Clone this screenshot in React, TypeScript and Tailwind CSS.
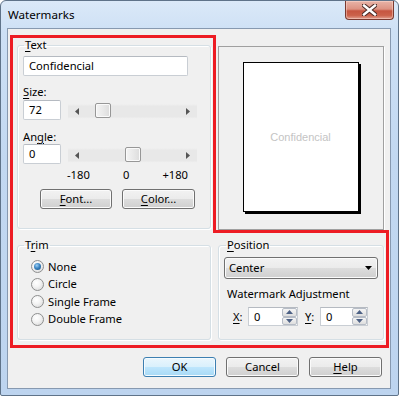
import React from "react";

function Btn({ children, className = "", def = false }: { children: React.ReactNode; className?: string; def?: boolean }) {
  return (
    <div
      className={
        "h-[20px] rounded-[3px] border flex items-center justify-center text-[11.2px] leading-[16px] text-black " +
        (def
          ? "border-[#3c7fb1] bg-[linear-gradient(#eaf6fd_0%,#d9f0fc_50%,#bee6fd_50%,#a7d9f5_100%)] shadow-[inset_0_0_0_1px_#f4fbff] "
          : "border-[#707070] bg-[linear-gradient(#f2f2f2_0%,#ebebeb_50%,#dddddd_50%,#cfcfcf_100%)] shadow-[inset_0_0_0_1px_#fbfbfb] ") +
        className
      }
    >
      {children}
    </div>
  );
}

function Track({ thumb }: { thumb: number }) {
  return (
    <div className="relative w-[129px] h-[15px] bg-[linear-gradient(#f0f0f0_0%,#e8e8e8_15%,#e8e8e8_85%,#f2f2f2_100%)]">
      <svg className="absolute left-[7px] top-[4px]" width="5" height="7" viewBox="0 0 5 7">
        <path d="M4 0 L0 3.5 L4 7 Z" fill="#555" />
      </svg>
      <svg className="absolute right-[7px] top-[4px]" width="5" height="7" viewBox="0 0 5 7">
        <path d="M1 0 L5 3.5 L1 7 Z" fill="#555" />
      </svg>
      <div
        className="absolute top-[-1px] h-[15px] w-[16px] rounded-[2px] border border-[#979797] bg-[linear-gradient(90deg,#f4f4f4_0%,#e9e9e9_50%,#dcdcdc_100%)] shadow-[inset_0_0_0_1px_#fafafa]"
        style={{ left: thumb }}
      />
    </div>
  );
}

function TextBox({ value, className = "" }: { value: string; className?: string }) {
  return (
    <div
      className={
        "h-[20px] bg-white border border-[#c9ced4] border-t-[#b5bac1] rounded-[2px] flex items-center pl-[5px] text-[11.2px] leading-[16px] text-black " +
        className
      }
    >
      {value}
    </div>
  );
}

function Radio({ checked, label }: { checked?: boolean; label: string }) {
  return (
    <div className="h-[17.5px] flex items-center gap-[4px]">
      <div className="w-[13px] h-[13px] rounded-full border border-[#8e8f8f] bg-[radial-gradient(circle_at_40%_35%,#ffffff_0%,#f4f4f4_40%,#d4d4d4_100%)] flex items-center justify-center">
        {checked && (
          <div className="w-[7px] h-[7px] rounded-full bg-[radial-gradient(circle_at_40%_35%,#9fd0f5_0%,#3c86c3_45%,#154a7b_100%)]" />
        )}
      </div>
      <span className="text-[11.2px] leading-[16px] text-black">{label}</span>
    </div>
  );
}

function Spin({ className = "" }: { className?: string }) {
  return (
    <div
      className={
        "h-[19px] bg-white border border-[#c9ced4] border-t-[#b5bac1] flex items-stretch " + className
      }
    >
      <div className="flex-1 pl-[5px] text-[11.2px] leading-[17px] text-black">0</div>
      <div className="w-[15px] flex flex-col">
        <div className="flex-1 border border-[#b6bcc6] rounded-[2px] bg-[linear-gradient(#f5f5f5,#dedede)] flex items-center justify-center">
          <svg width="7" height="4" viewBox="0 0 7 4">
            <path d="M0 4 L3.5 0 L7 4 Z" fill="#4d6185" />
          </svg>
        </div>
        <div className="flex-1 border border-[#b6bcc6] rounded-[2px] bg-[linear-gradient(#f5f5f5,#dedede)] flex items-center justify-center">
          <svg width="7" height="4" viewBox="0 0 7 4">
            <path d="M0 0 L3.5 4 L7 0 Z" fill="#4d6185" />
          </svg>
        </div>
      </div>
    </div>
  );
}

const fieldset =
  "border border-[#d5dfe5] rounded-[3px] shadow-[inset_1px_1px_0_#fff,1px_1px_0_#fff] m-0";
const legend = "px-[1px] text-[11.2px] leading-[16px] text-black";

export default function App() {
  return (
    <div className="font-['Noto_Sans',sans-serif] w-[399px] h-[396px] relative">
      <div className="w-[399px] h-[396px] border border-[#5f7389] rounded-t-[6px] rounded-b-[2px] bg-[linear-gradient(180deg,#dbe9f8_0%,#cde0f5_8%,#c2d8f1_40%,#bdd4ef_100%)] flex flex-col px-[6px] pb-[6px] relative">
        <div className="h-[27px] pl-[1px] pt-[6px] text-[11.6px] leading-[16px] text-black">Watermarks</div>
        <div className="absolute top-0 right-[4px] w-[49px] h-[19px] rounded-b-[4px] border border-t-0 border-[#7a3a30] bg-[linear-gradient(#e8b4a8_0%,#dc9282_45%,#c65540_55%,#cb624b_80%,#e2a090_100%)] shadow-[inset_0_0_0_1px_rgba(255,225,215,0.45)] flex items-center justify-center">
          <svg width="15" height="12" viewBox="0 0 15 12">
            <path d="M2 1.5 L13 10.5 M13 1.5 L2 10.5" stroke="#4a2a25" strokeWidth="4.5" strokeLinecap="square" />
            <path d="M2 1.5 L13 10.5 M13 1.5 L2 10.5" stroke="#ffffff" strokeWidth="2.4" strokeLinecap="square" />
          </svg>
        </div>
        <div className="w-[384px] h-[361px] border border-[#8799b0] bg-[#f0f0f0] pl-[9px] pt-[8px] flex flex-col">
          <div className="flex gap-[7px] items-start">
            <fieldset className={fieldset + " w-[194px] h-[192px] pl-[5px] pr-0 pb-0 pt-0"}>
              <legend className={legend + " ml-[1px]"}>
                <u className="underline-offset-[2px]">T</u>ext
              </legend>
              <TextBox value="Confidencial" className="mt-[3px] w-[165px]" />
              <div className="mt-[8px] text-[11.2px] leading-[15px] text-black">
                <u className="underline-offset-[2px]">S</u>ize:
              </div>
              <div className="mt-[1px] flex gap-[7px] items-start">
                <TextBox value="72" className="w-[38px]" />
                <div className="mt-[4px]">
                  <Track thumb={27} />
                </div>
              </div>
              <div className="mt-[9px] text-[11.2px] leading-[15px] text-black">
                An<u className="underline-offset-[2px]">g</u>le:
              </div>
              <div className="mt-0 flex gap-[7px] items-start">
                <TextBox value="0" className="w-[38px]" />
                <div className="mt-[4px]">
                  <Track thumb={57} />
                </div>
              </div>
              <div className="mt-[3px] ml-[44px] w-[121px] flex justify-between text-[11.2px] leading-[15px] text-black">
                <span>-180</span>
                <span>0</span>
                <span>+180</span>
              </div>
              <div className="mt-[7px] ml-[17px] flex gap-[10px]">
                <Btn className="w-[72px]">
                  <span>
                    <u className="underline-offset-[2px]">F</u>ont...
                  </span>
                </Btn>
                <Btn className="w-[73px]">
                  <span>
                    <u className="underline-offset-[2px]">C</u>olor...
                  </span>
                </Btn>
              </div>
            </fieldset>
            <div className="mt-[9px] w-[166px] h-[184px] border border-[#a0a0a0] shadow-[1px_1px_0_#fff] flex items-center justify-center">
              <div className="pl-[1px] pr-[2px] pb-[2px]">
                <div className="w-[116px] h-[150px] bg-white border border-black shadow-[2px_2px_0_#000] flex items-center justify-center font-['Liberation_Sans',sans-serif] text-[11px] text-[#c4c4c4]">
                  Confidencial
                </div>
              </div>
            </div>
          </div>
          <div className="mt-[7px] flex gap-[7px] items-start">
            <fieldset className={fieldset + " w-[194px] h-[103px] pl-[13px] pr-0 pb-0 pt-0"}>
              <legend className={legend + " -ml-[7px]"}>
                T<u className="underline-offset-[2px]">r</u>im
              </legend>
              <div className="mt-[5px] flex flex-col">
                <Radio checked label="None" />
                <Radio label="Circle" />
                <Radio label="Single Frame" />
                <Radio label="Double Frame" />
              </div>
            </fieldset>
            <fieldset className={fieldset + " w-[166px] h-[103px] pl-[5px] pr-0 pb-0 pt-0"}>
              <legend className={legend + " ml-[2px]"}>
                <u className="underline-offset-[2px]">P</u>osition
              </legend>
              <div className="mt-[4px] w-[154px] h-[22px] rounded-[3px] border border-[#707070] bg-[linear-gradient(#f2f2f2_0%,#ebebeb_50%,#dddddd_50%,#cfcfcf_100%)] shadow-[inset_0_0_0_1px_#fbfbfb] flex items-center justify-between pl-[4px] pr-[5px] text-[11.2px] leading-[16px] text-black">
                <span>Center</span>
                <svg width="7" height="4" viewBox="0 0 7 4">
                  <path d="M0 0 L7 0 L3.5 4 Z" fill="#000" />
                </svg>
              </div>
              <div className="mt-[7px] pl-[3px] text-[11.2px] leading-[15px] text-black">Watermark Adjustment</div>
              <div className="mt-[6px] flex items-center text-[11.2px] leading-[16px] text-black">
                <span className="ml-[9px] w-[15px]">
                  <u className="underline-offset-[2px]">X</u>:
                </span>
                <Spin className="w-[50px]" />
                <span className="ml-[7px] w-[15px]">
                  <u className="underline-offset-[2px]">Y</u>:
                </span>
                <Spin className="w-[48px]" />
              </div>
            </fieldset>
          </div>
          <div className="mt-[17px] flex justify-end gap-[10px] pr-[8px]">
            <Btn def className="w-[73px]">OK</Btn>
            <Btn className="w-[73px]">Cancel</Btn>
            <Btn className="w-[73px]">
              <span>
                <u className="underline-offset-[2px]">H</u>elp
              </span>
            </Btn>
          </div>
        </div>
      </div>
      <svg className="absolute inset-0 pointer-events-none" width="399" height="396" viewBox="0 0 399 396">
        <path d="M11.5 36.5 H214.5 V231.5 H387.5 V346.5 H11.5 Z" fill="none" stroke="#ed1c24" strokeWidth="3" />
      </svg>
    </div>
  );
}
